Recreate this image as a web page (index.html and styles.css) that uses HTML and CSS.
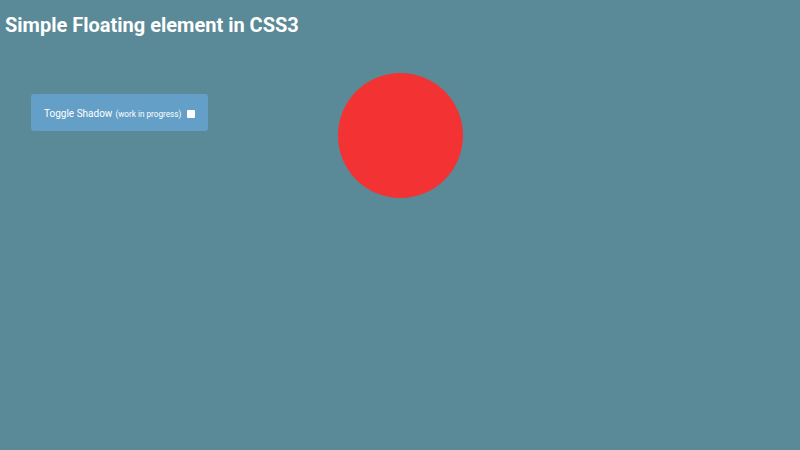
FILE: index.html
```html
<!DOCTYPE html>
<html>
<head>
<meta charset="utf-8">
<link rel="stylesheet" href="styles.css">
</head>
<body>
<h1 class="title">Simple Floating element in CSS3</h1>
<div class="controls">
  <label class="toggle">Toggle Shadow <small class="note">(work in progress)</small> <input type="checkbox" class="check"></label>
</div>
<div class="stage">
  <div class="ball"></div>
</div>
</body>
</html>
```
FILE: styles.css
```css
html, body {
  margin: 0;
  padding: 0;
  height: 100%;
}
body {
  background: #5a8a97;
  font-family: Roboto, "Liberation Sans", sans-serif;
  color: #fff;
}
.title {
  margin: 0;
  padding: 13px 0 0 5px;
  font-size: 20px;
  line-height: 24px;
  font-weight: 700;
}
.controls {
  position: absolute;
  left: 31px;
  top: 94px;
  width: 177px;
  height: 37px;
  box-sizing: border-box;
  background: #649fc7;
  border-radius: 3px;
  display: flex;
  align-items: center;
  padding: 2px 0 0 13px;
}
.toggle {
  font-size: 10px;
  display: flex;
  align-items: center;
  white-space: nowrap;
}
.note {
  font-size: 8.2px;
  margin-left: 3px;
}
.check {
  appearance: none;
  -webkit-appearance: none;
  width: 8px;
  height: 8px;
  margin: 0 0 0 6px;
  background: #fff;
  border: none;
  border-radius: 1px;
}
.stage {
  display: flex;
  justify-content: center;
  padding-top: 36px;
}
.ball {
  width: 125px;
  height: 125px;
  border-radius: 50%;
  background: #f33333;
}
```
